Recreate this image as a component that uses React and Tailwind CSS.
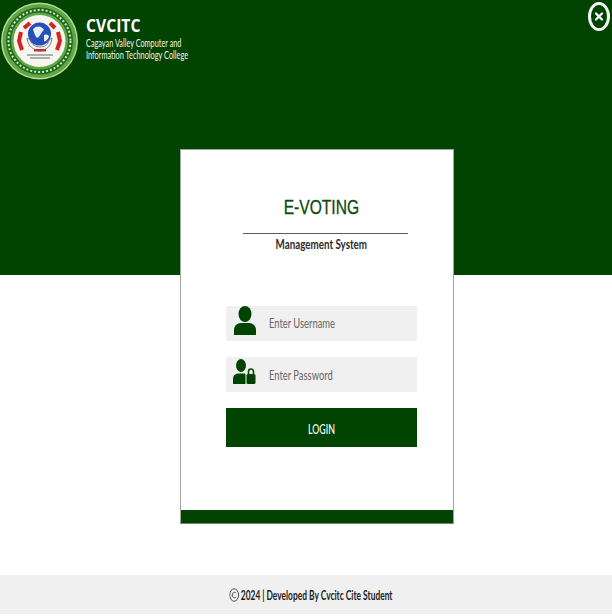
export default function App() {
  return (
    <div className="w-[612px] h-[616px] bg-white overflow-hidden flex flex-col font-['Lato','Liberation_Sans',sans-serif]">
      <header className="h-[275px] shrink-0 bg-[#014401] relative flex items-start">
        <svg width="80" height="82" viewBox="0 0 80 82" className="shrink-0">
          <circle cx="39.5" cy="41" r="38.5" fill="#b9d69a" />
          <circle cx="39.5" cy="41" r="37" fill="#5fa83f" />
          <circle cx="39.5" cy="41" r="31" fill="none" stroke="#1f6a24" strokeWidth="5" />
          <circle cx="39.5" cy="41" r="31" fill="none" stroke="#d8e6b8" strokeWidth="2" strokeDasharray="2 2" />
          <circle cx="39.5" cy="41" r="26" fill="#f5f6ef" />
          <g fill="none" stroke="#d8231f" strokeWidth="4">
            <path d="M21 32 L19 41 L22 50" />
            <path d="M58 32 L60 41 L57 50" />
            <path d="M24 28 L30 23 M55 28 L50 23" />
          </g>
          <circle cx="39.5" cy="34" r="11.5" fill="#2450b8" />
          <path d="M33 29 C37 25 42 26 44 30 C41 32 41 36 37 38 C35 36 34 33 33 29 Z M44 35 C47 34 49 35 49 37 C47 40 46 42 44 41 Z" fill="#e8eef8" />
          <path d="M27 38 C28 47 34 50 40 51 C46 50 51 47 52 38 L49 40 C48 45 44 47 40 47 C36 47 32 45 30 40 Z" fill="#f0f0f0" stroke="#555" strokeWidth="0.7" />
          <rect x="34" y="49" width="12" height="2.5" fill="#b33" />
          <path d="M27 55 H53 M30 58 H50" stroke="#666" strokeWidth="1" />
        </svg>
        <div className="ml-[6px] mt-[13px] flex flex-col text-white">
          <span className="font-['Open_Sans',sans-serif] font-bold text-[18px] leading-[24px] origin-left scale-x-[0.87]">CVCITC</span>
          <span className="text-[11px] leading-[12px] w-[102px] whitespace-nowrap origin-left scale-x-[0.665] text-[#eef4ea]">Cagayan Valley Computer and</span>
          <span className="text-[11px] leading-[12px] w-[102px] whitespace-nowrap origin-left scale-x-[0.67] text-[#eef4ea]">Information Technology College</span>
        </div>
        <div className="absolute left-[588px] top-[2px] w-[22px] h-[29px] rounded-[50%] border-[3px] border-[#f4f6f2] flex items-center justify-center">
          <svg width="10" height="11" viewBox="0 0 10 11"><path d="M2 2.5 L8 8.5 M8 2.5 L2 8.5" stroke="#f4f6f2" strokeWidth="2.4" strokeLinecap="round" /></svg>
        </div>
      </header>

      <main className="flex-1 flex justify-center">
        <div className="w-[274px] h-[375px] mt-[-126px] ml-[22px] bg-white border border-[#a3a3a3] border-b-[#6a8a6a] flex flex-col items-center relative z-10 pl-[9px]">
          <h1 className="mt-[45px] font-['Liberation_Sans',sans-serif] text-[20px] leading-[24px] text-[#0b4a0b] [-webkit-text-stroke:0.3px_#0b4a0b] scale-x-[0.78]">E-VOTING</h1>
          <div className="mt-[14px] ml-[8px] w-[165px] h-px bg-[#5c5c5c]" />
          <p className="mt-[1px] text-[14px] leading-[18px] font-bold text-[#2c2c2c] whitespace-nowrap scale-x-[0.7]">Management System</p>

          <div className="mt-[53px] w-[191px] h-[35px] bg-[#f0f0f0] flex items-center">
            <svg width="22" height="30" viewBox="0 0 22 30" className="ml-[8px] shrink-0 mt-[-5px]">
              <ellipse cx="11" cy="8" rx="6.5" ry="8" fill="#014401" />
              <path d="M0 29 V24 C0 20 3 17 7 17 H15 C19 17 22 20 22 24 V29 Z" fill="#014401" />
            </svg>
            <span className="ml-[13px] text-[14px] text-[#666] whitespace-nowrap origin-left scale-x-[0.67] mt-[-2px]">Enter Username</span>
          </div>

          <div className="mt-[16px] w-[191px] h-[35px] bg-[#f0f0f0] flex items-center">
            <svg width="23" height="26" viewBox="0 0 23 26" className="ml-[7px] shrink-0 mt-[-5px]">
              <ellipse cx="8" cy="6.5" rx="5" ry="6.5" fill="#014401" />
              <path d="M0 25 V20 C0 16 3 14.5 6 14.5 H11 C12 14.5 12.5 15 12.5 16 V25 Z" fill="#014401" />
              <path d="M16 15 V12.5 a2.5 2.5 0 0 1 5 0 V15" fill="none" stroke="#014401" strokeWidth="1.6" transform="translate(-0.5 0)" />
              <rect x="13.5" y="15" width="9" height="10" rx="1.5" fill="#014401" />
            </svg>
            <span className="ml-[13px] text-[14px] text-[#666] whitespace-nowrap origin-left scale-x-[0.67]">Enter Password</span>
          </div>

          <button className="mt-[16px] w-[191px] h-[39px] bg-[#014401] text-white text-[14px] font-medium pt-[2px]"><span className="inline-block scale-x-[0.63]">LOGIN</span></button>

          <div className="mt-auto ml-[-9px] w-[272px] h-[13px] bg-[#014401]" />
        </div>
      </main>

      <footer className="h-[39px] mb-[2px] shrink-0 bg-[#f0f0f0] flex items-center justify-center">
        <span className="ml-[9px] text-[14px] font-bold text-[#222] whitespace-nowrap scale-x-[0.6] inline-flex items-center gap-[3px]">
          <svg width="16" height="14" viewBox="0 0 16 14"><ellipse cx="8" cy="7" rx="7.3" ry="6.2" fill="none" stroke="#222" strokeWidth="1" /><path d="M11 5 C9.8 4 5 3.9 4.8 7 C5 10.1 9.8 10 11 9" fill="none" stroke="#222" strokeWidth="1" /></svg>
          2024 | Developed By Cvcitc Cite Student
        </span>
      </footer>
    </div>
  );
}
